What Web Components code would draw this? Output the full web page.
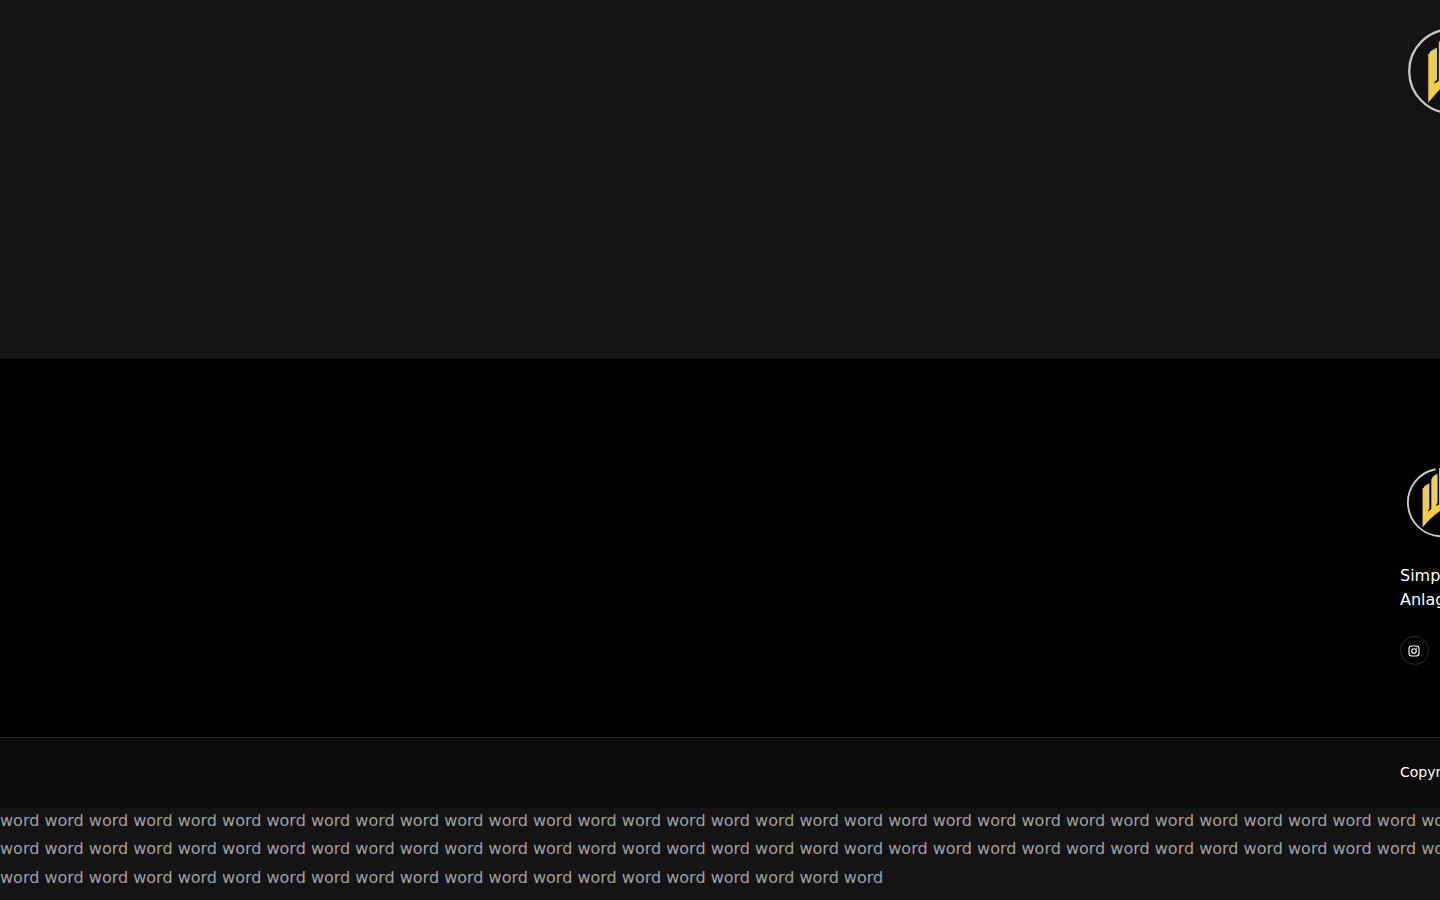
<!DOCTYPE html>
<html lang="de">
<head>
<meta charset="utf-8">
<title>Footer</title>
<style>
html,body{margin:0;height:900px;overflow:hidden;background:#141414}
body{font:16px/24px "DejaVu Sans",sans-serif;color:#fff}
</style>
</head>
<body>
<site-page>
  <page-hero slot="hero"><brand-logo></brand-logo></page-hero>
  <footer-main slot="main"><mini-logo slot="logo"></mini-logo><span slot="about">Simple<br>Anlagen</span><social-link slot="social"></social-link></footer-main>
  <footer-bar slot="bar">Copyright</footer-bar>
  <filler-text slot="text"></filler-text>
</site-page>
<script>
const define = (name, html, after) => customElements.define(name, class extends HTMLElement {
  constructor() {
    super();
    this.attachShadow({ mode: 'open' }).innerHTML = html;
    if (after) after(this.shadowRoot);
  }
});

define('site-page', `<style>:host{display:flex;flex-direction:column;width:1440px;height:900px;overflow:hidden}</style>
<slot name="hero"></slot><slot name="main"></slot><slot name="bar"></slot><slot name="text"></slot>`);

define('page-hero', `<style>:host{display:block;box-sizing:border-box;flex:none;height:358px;padding:20px 0 0 1400px;background:#141414;border-bottom:1px solid #1b1b1b;overflow:hidden}</style><slot></slot>`);

define('brand-logo', `<style>:host{display:block;width:40px;height:100px}svg{display:block}</style>
<svg width="40" height="100" viewBox="1400 20 40 100">
<circle cx="1451" cy="71.200" r="41.8" fill="#111" stroke="#c8c8c8" stroke-width="2.3"/>
<path d="M1430 51.500L1437 47.500V80L1434 82Z" fill="#c8c8c8"/>
<path d="M1428.300 54L1434.500 50V83.500L1440 80.500V89L1428.300 102.500Z" fill="#f7cf3e"/>
<path d="M1438.800 42L1440 41V81H1438.800Z" fill="#f7cf3e"/>
</svg>`);

define('footer-main', `<style>:host{display:flex;flex-direction:column;box-sizing:border-box;flex:none;height:379px;padding:102px 0 0 1400px;background:#000;overflow:hidden}
.about{height:48px;margin-top:24px;line-height:24px;white-space:nowrap}.social{margin-top:24px}</style>
<slot name="logo"></slot><div class="about"><slot name="about"></slot></div><div class="social"><slot name="social"></slot></div>`);

define('mini-logo', `<style>:host{display:block;width:40px;height:80px}svg{display:block}</style>
<svg width="40" height="80" viewBox="1400 460 40 80">
<path d="M1435.500 469.300A33.800 33.800 0 0 0 1440.500 536.300" fill="none" stroke="#c8c8c8" stroke-width="1.900"/>
<path d="M1424 486.500L1429.400 483V509L1427.500 511ZM1432.300 477L1437.600 473.500V503L1435.500 505Z" fill="#c8c8c8"/>
<path d="M1422.600 488.500L1428 485V511.500L1431.300 509V479L1436.400 475.500V506L1440 504V511Q1430 518 1422.600 527.500Z" fill="#f7cf3e"/>
<path d="M1439 468.500L1440 468V505H1439Z" fill="#e0c45a"/>
</svg>`);

define('social-link', `<style>:host{display:flex;align-items:center;justify-content:center;box-sizing:border-box;width:29px;height:29px;border:1px solid #292929;border-radius:50%}svg{display:block;margin-right:1px}</style>
<svg width="12" height="12" viewBox="0 0 12 12" fill="none" stroke="#fff" stroke-width="1.100"><rect x="1" y="1" width="10" height="10" rx="2.700"/><circle cx="6" cy="6" r="2.300"/><circle cx="8.800" cy="3.200" r=".6" fill="#fff" stroke="none"/></svg>`);

define('footer-bar', `<style>:host{display:block;box-sizing:border-box;flex:none;height:71px;padding:22px 0 0 1400px;background:#0c0c0c;border-top:1px solid #292929;font-size:14px;line-height:24px;overflow:hidden;white-space:nowrap}</style><slot></slot>`);

define('filler-text', `<style>:host{display:block;flex:1;background:#141414;color:#a0a0a0;font-size:16px;line-height:28.500px;white-space:nowrap;overflow:hidden}p{margin:-1.400px 0 0}</style><p></p>`,
  root => {
    const line = n => Array(n).fill('word').join(' ');
    root.querySelector('p').innerHTML = [line(33), line(33), line(20)].join('<br>');
  });
</script>
</body>
</html>
